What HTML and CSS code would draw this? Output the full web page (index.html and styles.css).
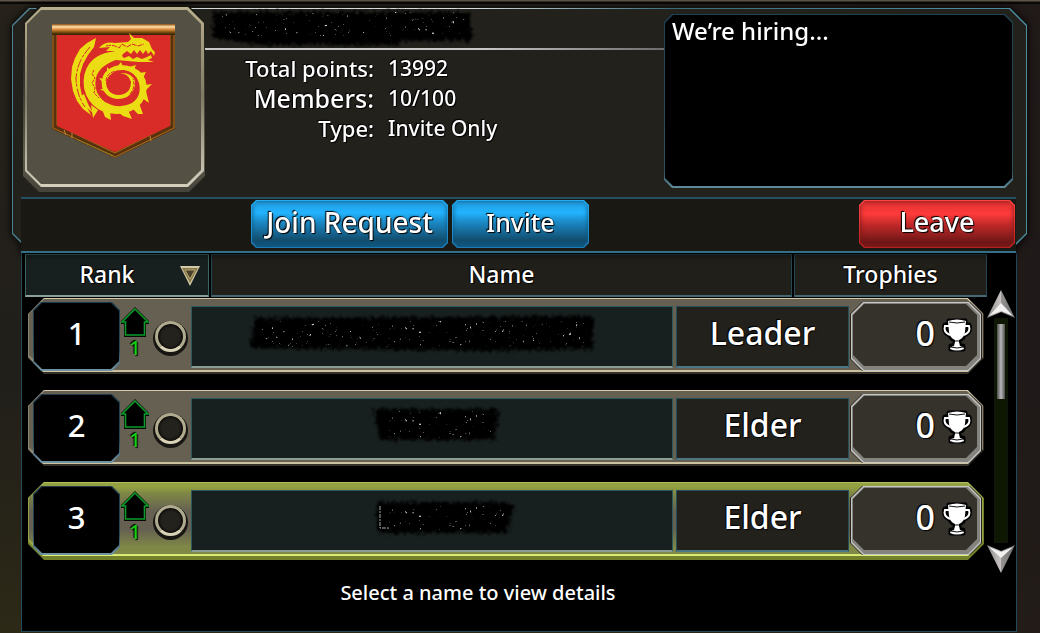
FILE: index.html
```html
<!DOCTYPE html>
<html lang="en">
<head>
  <meta charset="UTF-8" />
  <meta name="viewport" content="width=device-width, initial-scale=1.0"/>
  <title>Guild</title>
  <link rel="stylesheet" href="styles.css">
</head>
<body>

  <!-- shared shapes -->
  <svg class="defs" width="0" height="0" aria-hidden="true">
    <defs>
      <filter id="rough" x="-5%" y="-20%" width="110%" height="140%">
        <feTurbulence type="fractalNoise" baseFrequency="0.35" numOctaves="3" seed="4" result="noise"/>
        <feDisplacementMap in="SourceGraphic" in2="noise" scale="12"/>
        <feGaussianBlur stdDeviation="0.8"/>
      </filter>
      <filter id="specks" x="0" y="0" width="100%" height="100%">
        <feTurbulence type="fractalNoise" baseFrequency="0.3" numOctaves="2" seed="9"/>
        <feColorMatrix values="0 0 0 0 0.6  0 0 0 0 0.6  0 0 0 0 0.6  8 0 0 0 -5.7"/>
        <feComposite in2="SourceGraphic" operator="in"/>
      </filter>
      <linearGradient id="gold" x1="0" y1="0" x2="0" y2="1">
        <stop offset="0" stop-color="#8a4a10"/>
        <stop offset="0.25" stop-color="#ffe0a8"/>
        <stop offset="0.5" stop-color="#d98a3c"/>
        <stop offset="0.75" stop-color="#7a4c10"/>
        <stop offset="1" stop-color="#2c1c04"/>
      </linearGradient>
      <linearGradient id="steel" x1="0" y1="0" x2="1" y2="0">
        <stop offset="0" stop-color="#8f8b8b"/>
        <stop offset="0.5" stop-color="#c8c4c4"/>
        <stop offset="0.5" stop-color="#989494"/>
        <stop offset="1" stop-color="#6f6c6c"/>
      </linearGradient>
      <symbol id="up" viewBox="0 0 30 32">
        <path d="M15 1 L29 15 V18 H26 V31 H4 V18 H1 V15 Z" fill="#050805"/>
        <path d="M15 3 L28 16 H24.500 V29 H5.500 V16 H2 Z" fill="#000" stroke="#0a9a28" stroke-width="1.600"/>
      </symbol>
      <symbol id="cup" viewBox="0 0 32 36">
        <g stroke="#000" stroke-width="5" fill="none" stroke-linejoin="round">
          <path d="M8 8 H4 Q2 15 9 18 M24 8 H28 Q30 15 23 18"/>
          <path d="M8 4 H24 V15 Q23 21 18 23 V29 H22 V32 H10 V29 H14 V23 Q9 21 8 15 Z"/>
        </g>
        <path d="M8 9 H4 Q2 15 9 18 M24 9 H28 Q30 15 23 18" fill="none" stroke="#fff" stroke-width="2"/>
        <path d="M7 4 Q16 1 25 4 L24 15 Q23 21 18 23 V25 L19 29 Q23 30 23 32 Q16 35 9 32 Q9 30 13 29 L14 25 V23 Q9 21 8 15 Z" fill="#fff"/>
        <path d="M8 5 Q16 7 24 5 M14 24 H18 M10 30 Q16 32 22 30" fill="none" stroke="#111" stroke-width="1"/>
      </symbol>
    </defs>
  </svg>

  <section class="guild">
    <div class="guild-info">
      <div class="crest">
        <div class="crest-inner">
          <svg viewBox="52 24 124 136" width="124" height="136" role="img" aria-label="Guild banner">
            <path d="M52 30 H175 V129 L115 158 L52 129 Z" fill="#5a300e"/>
            <path d="M53 32 V128 L115 157 L174 128 V32 M57 34 V125 L115 153 L170 125 V34" fill="none" stroke="#a8701c" stroke-width="1"/>
            <path d="M57 33 H170 V126 L115 152 L57 126 Z" fill="#d92b28"/>
            <path d="M64 130 L66 135 M72 133 V138 M150 136 L151 141" stroke="#c48a30" stroke-width="1"/>
            <path d="M78 140 L114 156" stroke="#7f8a20" stroke-width="1" stroke-dasharray="2 1"/>
            <rect x="52" y="24" width="123" height="11" fill="url(#gold)"/>
            <g fill="#ecdc14">
              <!-- wing -->
              <path d="M96 38 L87 43 L80 49 L75 58 L72 67 L71 79 L73 91 L77 101 L83 109 L91 115 L86 105 L82 96 L80 86 L80 74 L83 64 L88 55 L94 47 Z"/>
              <path d="M81 96 L84 94 L88 104 L93 113 L86 107 Z"/>
              <!-- coiled body -->
              <path d="M118 51 Q98 52 89 64 Q82 74 84 88 Q87 102 98 109 Q110 116 125 113 Q140 109 145 97 Q149 84 143 75 Q135 65 121 65 Q108 66 103 76 Q99 88 107 95 Q116 102 127 97 Q136 91 135 81 Q131 72 120 73 Q129 74 131 82 Q131 91 124 94 Q115 97 109 91 Q103 83 109 76 Q115 69 124 70 Q136 72 139 83 Q142 96 132 103 Q119 110 105 102 Q93 93 96 78 Q99 65 119 59 Z"/>
              <!-- spikes -->
              <path d="M91 105 L93 118 L98 110 Z M102 109 L105 117 L111 120 L110 111 Z M118 112 L123 116 L132 119 L128 110 Z M132 108 L138 114 L143 114 L139 103 Z M142 98 L149 103 L146 91 Z M146 90 L152 84 L145 85 Z M143 78 L146 72 L139 73 Z M134 70 L136 65 L129 67 Z M123 67 L121 62 L117 67 Z M110 70 L107 67 L107 72 Z M104 79 L99 78 L103 83 Z M104 88 L100 90 L106 91 Z"/>
              <!-- head -->
              <path d="M99 48 Q105 41 115 43 L128 42 L131 39 L129 33 L134 38 L142 38 L149 42 L152 49 L155 52 L154 56 L151 51 L148 54 L146 50 L143 54 L140 50 L137 54 L134 50 L131 54 L127 51 L123 54 Q121 56 124 58 L129 56 L133 59 L137 57 L142 59 L147 57 L151 55 L152 58 L148 60 L154 62 L139 62 L127 61 L116 60 L110 55 L115 51 L106 51 L110 47 Z"/>
            </g>
            <g fill="none" stroke="#d92b28" stroke-width="1">
              <path d="M90 47 Q77 61 76 79 Q77 96 85 107" stroke-dasharray="9 1 3 2"/>
              <path d="M94 70 L92 74 L95 78 L92 83 L95 88 L94 93 L99 98" stroke-dasharray="3 1"/>
              <path d="M106 46 Q113 44 119 48 L122 44 L127 47 L132 44 L138 46 L144 44" stroke-dasharray="5 1"/>
              <path d="M106 81 Q107 71 119 71 M130 94 Q136 87 133 79" stroke-dasharray="4 1"/>
            </g>
          </svg>
        </div>
      </div>

      <div class="stats">
        <h1 class="guild-name">
          <svg viewBox="0 0 300 40" width="300" height="40" role="img" aria-label="Guild name hidden">
            <path d="M8 4 H266 V33 H198 L190 37 H55 L8 30 Z" filter="url(#rough)"/>
            <path d="M12 4 H264 V28 H12 Z" filter="url(#specks)"/>
          </svg>
        </h1>
        <dl>
          <dt>Total points:</dt><dd>13992</dd>
          <dt class="wide">Members:</dt><dd>10/100</dd>
          <dt>Type:</dt><dd>Invite Only</dd>
        </dl>
      </div>

      <div class="notice"><p>We’re hiring...</p></div>
    </div>

    <div class="actions">
      <button class="btn join" type="button"><span>Join Request</span></button>
      <button class="btn invite" type="button"><span>Invite</span></button>
      <button class="btn leave" type="button"><span>Leave</span></button>
    </div>
  </section>

  <section class="members">
    <div class="list">
      <table>
        <thead>
          <tr>
            <th class="sorted">
              <button type="button"><span>Rank</span>
                <svg viewBox="0 0 20 20" width="20" height="20" aria-hidden="true">
                  <path d="M0 0 H20 L10 20 Z" fill="#d2cba8"/>
                  <path d="M2 2 H18 L10 17 Z" fill="#8a7a4a"/>
                  <path d="M5 4 H15 L10 13 Z" fill="#4a412c" stroke="#b5a46c" stroke-width="1"/>
                </svg>
              </button>
            </th>
            <th><button type="button">Name</button></th>
            <th><button type="button">Trophies</button></th>
          </tr>
        </thead>
        <tbody>
          <tr>
            <td class="rank">1</td>
            <td class="change"><svg width="30" height="32" aria-hidden="true"><use href="#up"/></svg><span>1</span></td>
            <td class="status"><i></i></td>
            <td class="name">
              <svg viewBox="0 0 480 60" role="img" aria-label="Name hidden">
                <path d="M63 11 L401 9 V42 L300 44 L58 41 Z" filter="url(#rough)"/>
                <path d="M68 14 H396 V40 H68 Z" filter="url(#specks)"/>
              </svg>
            </td>
            <td class="role">Leader</td>
            <td class="trophies"><div><span>0</span><svg width="32" height="36" aria-hidden="true"><use href="#cup"/></svg></div></td>
          </tr>
          <tr>
            <td class="rank">2</td>
            <td class="change"><svg width="30" height="32" aria-hidden="true"><use href="#up"/></svg><span>1</span></td>
            <td class="status"><i></i></td>
            <td class="name">
              <svg viewBox="0 0 480 60" role="img" aria-label="Name hidden">
                <path d="M182 10 H308 L302 41 H188 Z" filter="url(#rough)"/>
                <path d="M190 12 H302 V39 H190 Z" filter="url(#specks)"/>
              </svg>
            </td>
            <td class="role">Elder</td>
            <td class="trophies"><div><span>0</span><svg width="32" height="36" aria-hidden="true"><use href="#cup"/></svg></div></td>
          </tr>
          <tr class="selected">
            <td class="rank">3</td>
            <td class="change"><svg width="30" height="32" aria-hidden="true"><use href="#up"/></svg><span>1</span></td>
            <td class="status"><i></i></td>
            <td class="name">
              <svg viewBox="0 0 480 60" role="img" aria-label="Name hidden">
                <path d="M185 11 H310 L323 14 L315 42 H185 Z" filter="url(#rough)"/>
                <path d="M190 15 H314 V39 H190 Z" filter="url(#specks)"/>
                <path d="M188 15 V37 H198" fill="none" stroke="#aaa" stroke-width="1" stroke-dasharray="4 1 2 1"/>
              </svg>
            </td>
            <td class="role">Elder</td>
            <td class="trophies"><div><span>0</span><svg width="32" height="36" aria-hidden="true"><use href="#cup"/></svg></div></td>
          </tr>
        </tbody>
      </table>

      <div class="scroller">
        <button type="button" aria-label="Scroll up">
          <svg viewBox="0 0 28 28" width="28" height="28"><path d="M14 0 L28 28 L14 22 L0 28 Z" fill="url(#steel)"/><path d="M14 13 L26 26 L14 21 L2 26 Z" fill="#f2f0f0"/></svg>
        </button>
        <div class="track"><div class="thumb"></div></div>
        <button type="button" aria-label="Scroll down">
          <svg viewBox="0 0 28 28" width="28" height="28"><path d="M0 0 L14 6 L28 0 L14 28 Z" fill="url(#steel)"/><path d="M2 2 L14 7 L26 2 L14 13 Z" fill="#f2f0f0"/></svg>
        </button>
      </div>
    </div>
    <p class="hint">Select a name to view details</p>
  </section>

</body>
</html>
```
FILE: styles.css
```css
* {
  margin: 0;
  padding: 0;
  box-sizing: border-box;
}

body {
  min-height: 100vh;
  display: flex;
  flex-direction: column;
  padding: 8px 13px 0 12px;
  color: #fff;
  font-family: "Noto Sans", "Open Sans", sans-serif;
  font-weight: 500;
  text-shadow: 1px 1px 1px #000, -1px -1px 1px #000;
  background:
    linear-gradient(#5e5648 0, #5e5648 1px, #0a0806 2px, #0a0806 4px, transparent 4px),
    linear-gradient(90deg, transparent 60%, rgba(30, 22, 24, 0.7)),
    linear-gradient(#26221b, #211f1a 60%, #2c2917);
}

button {
  font: inherit;
  color: inherit;
  text-shadow: inherit;
  background: none;
  border: none;
  cursor: pointer;
}

svg {
  display: block;
}

.defs {
  position: absolute;
}

/* cut-corner boxes: --cut is the corner size */
.crest, .crest::before, .crest-inner,
.notice, .notice::before,
.btn, .btn::before,
tbody tr, tbody tr::before, tbody tr::after,
.rank, .rank::before,
.trophies, .trophies::before, .trophies::after, .trophies div {
  clip-path: polygon(
    var(--cut) 0, calc(100% - var(--cut)) 0,
    100% var(--cut), 100% calc(100% - var(--cut)),
    calc(100% - var(--cut)) 100%, var(--cut) 100%,
    0 calc(100% - var(--cut)), 0 var(--cut));
}

.crest::before, .notice::before, .btn::before,
tbody tr::before, tbody tr::after, .rank::before,
.trophies::before, .trophies::after {
  content: "";
  position: absolute;
  z-index: -1;
}

.crest, .notice, .btn, tbody tr, .rank, .trophies {
  position: relative;
  isolation: isolate;
}

/* top panel */
.guild {
  position: relative;
  isolation: isolate;
  filter: drop-shadow(0 0 4px #000);
}

.guild::before, .guild::after {
  content: "";
  position: absolute;
  inset: 0;
  z-index: -1;
  background: linear-gradient(90deg, #4a7f90, #d8dcdc 20%, #d8dcdc 45%, #3a6c7e 65%, #4d8ea2);
  clip-path: polygon(17px 0, calc(100% - 17px) 0, 100% 17px, 100% calc(100% - 19px), calc(100% - 19px) 100%, 19px 100%, 0 calc(100% - 19px), 0 17px);
}

.guild::after {
  inset: 1px;
  background: #23211c;
}

.guild-info {
  display: flex;
  height: 189px;
  padding-left: 11px;
  padding-right: 14px;
}

.crest {
  --cut: 16px;
  width: 182px;
  height: 186px;
  margin-top: -2px;
  padding: 4px 4px 8px;
  background: linear-gradient(#14130f, #5f5c4c 80%, #45433a);
}

.crest::before {
  inset: 1px 1px 5px 2px;
  background: linear-gradient(#b9b08d, #807a64 50%, #d5d0be);
}

.crest-inner {
  --cut: 14px;
  height: 100%;
  display: flex;
  justify-content: center;
  padding-top: 14px;
  background: #545044;
}

.stats {
  flex: 1;
}

.guild-name {
  height: 42px;
  border-bottom: 2px solid;
  border-image: linear-gradient(90deg, #c8c8c8 60%, #6c6c6c) 1;
}

.stats dl {
  display: grid;
  grid-template-columns: 169px 1fr;
  grid-auto-rows: 30px;
  column-gap: 14px;
  align-items: center;
  padding-top: 3px;
  line-height: 30px;
}

.stats dt {
  text-align: right;
  font-size: 22px;
}

.stats .wide {
  font-size: 25px;
}

.stats dd {
  font-size: 21px;
}

.notice {
  --cut: 8px;
  width: 349px;
  height: 174px;
  margin-top: 6px;
  padding: 2px 8px;
  background: linear-gradient(#1d4354, #2c4f5c 90%, #5f8c9b);
}

.notice::before {
  inset: 1px 1px 2px;
  background: #000;
}

.notice p {
  font-size: 24px;
  line-height: 30px;
}

.actions {
  display: flex;
  gap: 4px;
  height: 56px;
  margin: 0 11px 0 9px;
  padding: 1px 1px 0 230px;
  background: #191813;
  border-top: 2px solid #265062;
  border-bottom: 2px solid #34708a;
}

.btn {
  --cut: 5px;
  height: 48px;
  padding-bottom: 5px;
  font-size: 27px;
  background: linear-gradient(#24aef5, #1b7cb4);
}

.btn::before {
  inset: 1px;
  background: linear-gradient(#2299dd, #22b4ff 25%, #1b8bc8 45%, #124d6e 85%, #115880);
  box-shadow: inset 0 0 5px #0d5a86;
}

.join {
  width: 197px;
  font-size: 28px;
}

.invite {
  width: 137px;
  font-size: 25px;
}

.leave {
  width: 156px;
  margin-left: auto;
  background: linear-gradient(#ff4444, #b82020);
}

.leave::before {
  background: linear-gradient(#dd3333, #ff3a3a 28%, #c42a2a 50%, #6e1616 90%, #7c1a1a);
  box-shadow: inset 0 0 5px #7c1818;
}

/* member list */
.members {
  flex: 1;
  margin: 0 10px 1px 9px;
  background: #000;
  border: 1px solid #21495a;
  border-top: none;
}

.list {
  display: grid;
  grid-template-columns: 1fr 28px;
  padding: 1px 1px 0 3px;
}

table, thead, tbody {
  display: block;
}

thead tr {
  display: grid;
  grid-template-columns: 184px 1fr 193px;
  gap: 2px;
}

th {
  height: 43px;
  font-size: 23px;
  font-weight: 500;
  background: #211f1a;
  border: 1px solid #234753;
  border-bottom: 2px solid #456873;
}

th button {
  display: flex;
  align-items: center;
  justify-content: center;
  width: 100%;
  height: 100%;
  padding: 0 8px 3px;
}

th button span {
  flex: 1;
}

th button svg {
  margin-top: 4px;
}

.sorted {
  background: #18201f;
  border-color: #3a6664;
  border-bottom-color: #8ba09a;
}

tbody {
  display: grid;
  gap: 16px;
  padding: 1px 3px 0;
}

tbody tr {
  --cut: 16px;
  display: grid;
  grid-template-columns: 87px 28px 40px 1fr 175px 134px;
  column-gap: 1px;
  height: 76px;
  padding: 4px 0 3px 5px;
  background: #35312a;
}

tbody tr::before {
  --cut: 15px;
  inset: 0 1px 2px 0;
  background: linear-gradient(#d6ccaa, #8d846f 20%, #8d846f 80%, #cfc4a2);
}

tbody tr::after {
  --cut: 15px;
  inset: 1px 2px 4px 1px;
  background: #656052;
}

tbody .selected {
  height: 78px;
  background: #72802a;
}

tbody .selected::before {
  inset: 0 1px 4px 0;
  background: linear-gradient(#b3bf62, #93a140 20%, #93a140 80%, #dff07a);
}

tbody .selected::after {
  inset: 1px 2px 6px 1px;
  background: linear-gradient(#93a140 4px, #7f8846 10px, #656052 40%, #656052 65%, #7f8846 90%);
}

td {
  display: flex;
  align-items: center;
  justify-content: center;
}

.rank {
  --cut: 8px;
  height: 69px;
  padding-bottom: 8px;
  font-size: 31px;
  background: linear-gradient(#1c3a4c, #274656 70%, #7397a8);
}

.rank::before {
  inset: 1px 1px 2px;
  background: #000;
}

.change {
  flex-direction: column;
  justify-content: flex-start;
  padding-top: 4px;
  font-size: 20px;
  line-height: 20px;
  color: #12d312;
}

.change svg {
  flex: none;
}

.status {
  height: 69px;
}

.status i {
  width: 31px;
  height: 31px;
  border: 3px solid #b0aa8e;
  border-bottom-color: #d8d2b6;
  border-radius: 50%;
  background: #24221d;
  box-shadow: 0 2px 0 2px #171612, inset 0 0 3px 1px #000;
}

.name, .role {
  height: 62px;
  margin-top: 4px;
  background: #18201f;
  border: 1px solid #2b5a5e;
  border-bottom: 2px solid #8a9c94;
}

.name svg {
  width: 100%;
  height: 60px;
}

.role {
  margin-left: 2px;
  padding-bottom: 8px;
  font-size: 32px;
  background: #23211c;
  border-color: #24505c;
  border-bottom-color: #4c7684;
}

.trophies {
  --cut: 12px;
  height: 69px;
  margin-right: 2px;
  padding: 2px 5px 5px 3px;
  background: #26241f;
}

.trophies::before {
  inset: 0 1px 0 1px;
  background: #c6c6c4;
}

.trophies::after {
  inset: 1px 2px 1px 2px;
  background: #85837e;
}

.trophies div {
  --cut: 11px;
  display: flex;
  flex: 1;
  align-items: center;
  justify-content: flex-end;
  gap: 6px;
  height: 100%;
  padding-right: 4px;
  background: #35322c;
}

.trophies span {
  padding-bottom: 5px;
  font-size: 34px;
}

.scroller {
  display: flex;
  flex-direction: column;
  padding-top: 36px;
}

.track {
  flex: 1;
  width: 14px;
  margin: 0 auto 2px;
  padding: 5px 2px 0;
  background: #0d1702;
  border: 1px solid #11150c;
}

.thumb {
  height: 75px;
  background: linear-gradient(90deg, #4c4c4c, #b8b8b8 50%, #4c4c4c);
}

.scroller button:last-child {
  margin-bottom: -13px;
}

.hint {
  padding: 19px 82px 0 0;
  font-size: 20px;
  line-height: 28px;
  text-align: center;
}
```
